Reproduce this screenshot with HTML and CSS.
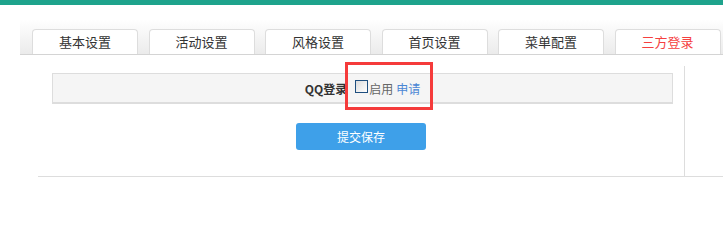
FILE: index.html
```html
<!DOCTYPE html>
<html lang="zh-CN">
<head>
    <meta charset="UTF-8">
    <title>三方登录设置</title>
    <link rel="stylesheet" href="styles.css">
</head>
<body>

    <!-- Верхняя полоса -->
    <div class="topbar"></div>

    <div class="wrap">
        <!-- Вкладки -->
        <div class="tabs">
            <a class="tab" href="#">基本设置</a>
            <a class="tab" href="#">活动设置</a>
            <a class="tab" href="#">风格设置</a>
            <a class="tab" href="#">首页设置</a>
            <a class="tab" href="#">菜单配置</a>
            <a class="tab active" href="#">三方登录</a>
        </div>

        <!-- Таблица настроек -->
        <div class="form-row">
            <div class="form-cell">
                <div class="option-box">
                    <span class="option-label">QQ登录</span>
                    <input type="checkbox" class="check">
                    <span class="option-text">启用</span>
                    <a class="option-link" href="#">申请</a>
                </div>
                <button class="save-btn">提交保存</button>
            </div>
            <div class="side-cell"></div>
        </div>
    </div>

    <!-- Красная рамка-пометка -->
    <div class="mark"></div>

</body>
</html>
```

FILE: styles.css
```css
body {
    font-family: "Noto Sans CJK SC", "Liberation Sans", sans-serif;
    background-color: #fff;
    color: #333;
    margin: 0;
    padding: 0;
    position: relative;
}

.topbar {
    height: 5px;
    background-color: #1ea38c;
}

.wrap {
    padding-top: 14px;
    margin-left: 20px;
}

/* Вкладки */
.tabs {
    display: flex;
    gap: 10.5px;
    height: 25px;
    padding: 10px 0 0 12px;
    background: linear-gradient(#fff, #ebebeb);
    border-bottom: 1px solid #d4d4d4;
}

.tab {
    width: 104px;
    height: 24px;
    line-height: 23px;
    text-align: center;
    font-size: 13px;
    color: #333;
    text-decoration: none;
    background-color: #fff;
    border: 1px solid #ddd;
    border-bottom: none;
    border-radius: 4px 4px 0 0;
}

.tab.active {
    color: #f54040;
}

/* Строка формы */
.form-row {
    display: flex;
    margin: 11px 0 0 18px;
    border-bottom: 1px solid #ddd;
}

.form-cell {
    width: 646px;
    height: 103px;
    border-right: 1px solid #ddd;
    padding-top: 7px;
    display: flex;
    flex-direction: column;
    align-items: center;
}

.side-cell {
    flex: 1;
}

.option-box {
    align-self: flex-start;
    margin-left: 14px;
    width: 619px;
    height: 28px;
    background-color: #f5f5f5;
    border: 1px solid #ddd;
    border-bottom-width: 2px;
    display: flex;
    align-items: center;
    justify-content: center;
    font-size: 12px;
}

.option-label {
    font-weight: bold;
    color: #333;
    margin-right: 8px;
}

.check {
    appearance: none;
    -webkit-appearance: none;
    width: 13px;
    height: 13px;
    margin: 0 1px 4px 0;
    border: 1px solid #1f4f7f;
    background: linear-gradient(135deg, #dcdcdc, #fff);
}

.option-text {
    color: #666;
    margin-right: 3px;
}

.option-link {
    color: #4a86d4;
    text-decoration: none;
}

.save-btn {
    margin-top: 19px;
    width: 130px;
    height: 27px;
    background-color: #3ea0e9;
    color: #fff;
    border: none;
    border-radius: 3px;
    font-family: inherit;
    font-size: 12px;
    cursor: pointer;
}

/* Пометка поверх содержимого */
.mark {
    position: absolute;
    left: 345px;
    top: 62px;
    width: 82px;
    height: 42px;
    border: 3px solid #f53b3b;
}
```
